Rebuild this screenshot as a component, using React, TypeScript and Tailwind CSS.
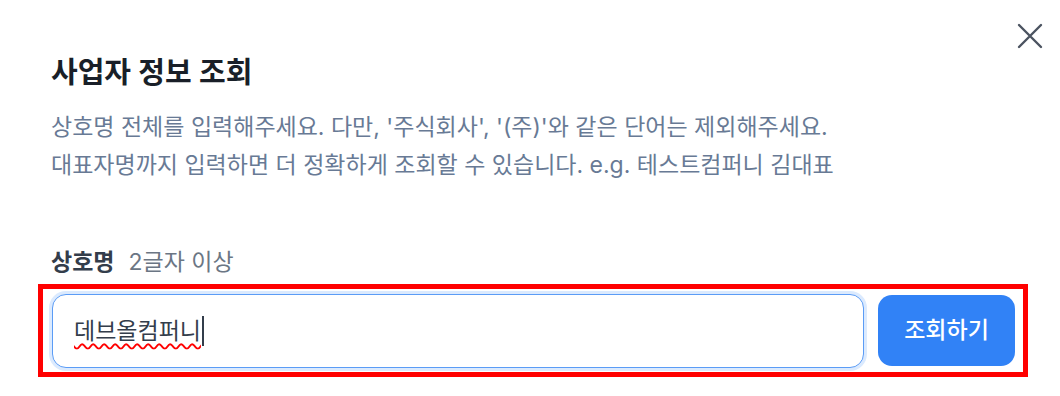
import React from "react";

export default function App() {
  return (
    <div
      className="relative w-[1060px] h-[396px] bg-white overflow-hidden"
      style={{ fontFamily: '"Inter", "Noto Sans CJK KR", sans-serif' }}
    >
      <button className="absolute top-[22px] right-[16px] w-[28px] h-[28px] flex items-center justify-center text-[#4b5360]">
        <svg width="26" height="26" viewBox="0 0 26 26" fill="none">
          <path d="M2 2L24 24M24 2L2 24" stroke="currentColor" strokeWidth="2.4" strokeLinecap="round" />
        </svg>
      </button>

      <div className="pl-[51px] pt-[53px]">
        <h1 className="text-[29px] leading-[40px] font-semibold text-[#191f28]">
          사업자 정보 조회
        </h1>
        <div className="mt-[15px] text-[23px] leading-[38px] text-[#687a95]">
          <p>상호명 전체를 입력해주세요. 다만, '주식회사', '(주)'와 같은 단어는 제외해주세요.</p>
          <p>대표자명까지 입력하면 더 정확하게 조회할 수 있습니다. e.g. 테스트컴퍼니 김대표</p>
        </div>

        <div className="mt-[63px] flex items-baseline gap-[14px] text-[23px] leading-[30px]">
          <span className="font-semibold text-[#333d4b]">상호명</span>
          <span className="text-[#6b7684]">2글자 이상</span>
        </div>
      </div>

      <div className="mt-[7px] ml-[38px] w-[990px] h-[93px] border-[5px] border-[#ff0000] flex items-center pl-[9px] gap-[14px]">
        <div className="w-[812px] h-[74px] rounded-[14px] border border-[#5b9cf6] ring-[3px] ring-[#dbeafe] bg-white flex items-center pl-[21px]">
          <span className="text-[23px] leading-[30px] text-[#333d4b] underline decoration-wavy decoration-[#ff0000] decoration-[1.5px] underline-offset-[4px]">
            데브올컴퍼니
          </span>
          <span className="w-[2px] h-[30px] bg-[#333d4b] ml-[1px]" />
        </div>
        <button className="w-[137px] h-[71px] rounded-[14px] bg-[#3182f6] text-white text-[23px] font-medium flex items-center justify-center">
          조회하기
        </button>
      </div>
    </div>
  );
}
